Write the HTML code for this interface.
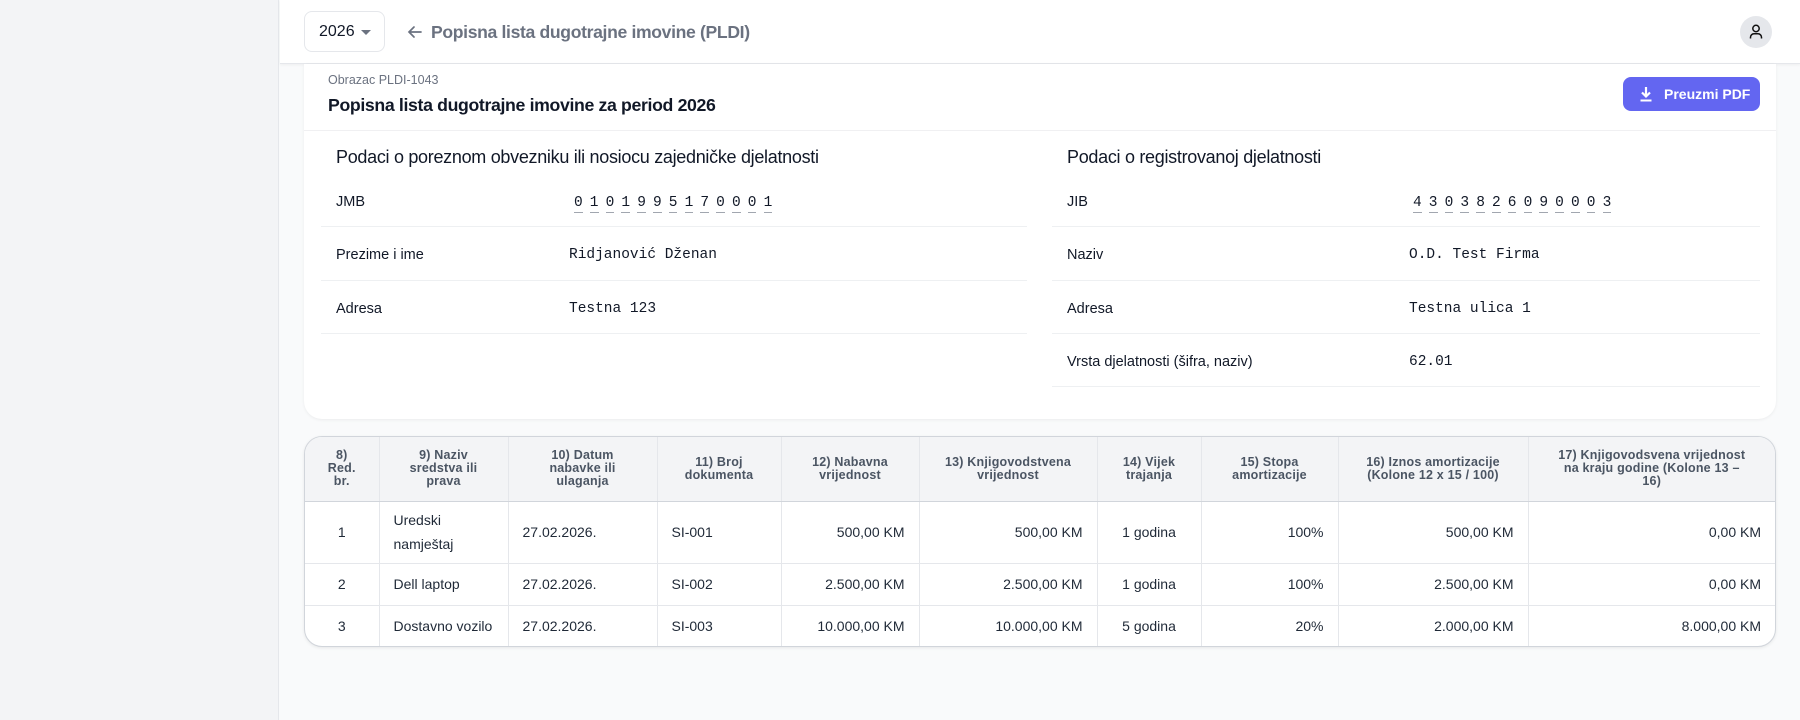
<!DOCTYPE html>
<html><head><meta charset="utf-8"><style>
*{box-sizing:border-box;margin:0;padding:0}
body{width:1800px;height:720px;overflow:hidden;background:#f9fafb;font-family:"Liberation Sans",sans-serif;color:#111827;position:relative}
.side{position:absolute;left:0;top:0;width:279px;height:720px;background:#f3f4f6;border-right:1px solid #e5e7eb}
.hdr{position:absolute;left:280px;top:0;right:0;height:64px;background:#fff;border-bottom:1px solid #e5e7eb;box-shadow:0 1px 3px rgba(0,0,0,.05)}
.sel{position:absolute;left:24px;top:11px;width:81px;height:41px;border:1px solid #e5e7eb;border-radius:8px;font-size:16px;padding:11px 0 0 14px;color:#111827}
.sel:after{content:"";position:absolute;right:13px;top:18px;border-left:5px solid transparent;border-right:5px solid transparent;border-top:5px solid #6b7280}
.title{position:absolute;left:151px;top:22px;font-size:17.6px;font-weight:bold;color:#6b7280;letter-spacing:-.35px}
.arrow{position:absolute;left:126px;top:23px}
.av{position:absolute;left:1460px;top:16px;width:32px;height:32px;border-radius:50%;background:#e5e7eb}
.card{position:absolute;left:304px;top:64px;width:1472px;height:355px;background:#fff;border-radius:0 0 18px 18px;box-shadow:0 1px 3px rgba(0,0,0,.06)}
.obr{position:absolute;left:24px;top:9px;font-size:12.5px;color:#6b7280}
.h1{position:absolute;left:24px;top:31px;font-size:17.7px;font-weight:bold;letter-spacing:-.35px}
.btn{position:absolute;left:1319px;top:13px;width:137px;height:34px;background:#6366f1;border-radius:8px;color:#fff;font-size:14px;font-weight:bold;padding:9px 0 0 41px}
.btn svg{position:absolute;left:16px;top:9px}
.div{position:absolute;left:0;right:0;top:66px;border-top:1px solid #f0f0f2}
.grid{position:absolute;top:66px;width:706px}
.grid h3{font-size:18px;font-weight:normal;height:44px;padding:17px 0 0 15px;letter-spacing:-.3px}
.row{height:53.3px;border-bottom:1px solid #eef0f2;position:relative;font-size:14.5px}
.row .l{position:absolute;left:15px;top:20px}
.row .v{position:absolute;top:20px;font-family:"Liberation Mono",monospace;font-size:14.5px}
.d{display:inline-block;border-bottom:1px solid #a1a6af;margin-right:7.1px;line-height:18px}
.tbl{position:absolute;left:304px;top:436px;width:1472px;height:211px;background:#fff;border:1px solid #d1d5db;border-radius:18px;overflow:hidden;box-shadow:0 1px 3px rgba(0,0,0,.08)}
table{border-collapse:collapse;width:100%}
th{background:#f3f4f6;font-size:12.5px;font-weight:bold;letter-spacing:.2px;color:#4b5563;line-height:13px;height:64px;border-right:1px solid #e5e7eb;border-bottom:1px solid #d1d5db;vertical-align:middle;padding:0 6px}
td{font-size:14px;color:#1f2937;border-right:1px solid #e5e7eb;border-bottom:1px solid #e5e7eb;padding:0 14px}
th:last-child,td:last-child{border-right:none}
tr:last-child td{border-bottom:none}
.r{text-align:right}.c{text-align:center}
</style></head><body>
<div class="side"></div>
<div class="hdr">
<div class="sel">2026</div>
<svg class="arrow" width="18" height="18" viewBox="0 0 18 18"><path d="M15 9H3M8 4L3 9l5 5" stroke="#6b7280" stroke-width="1.7" fill="none" stroke-linecap="round"/></svg>
<div class="title">Popisna lista dugotrajne imovine (PLDI)</div>
<div class="av"><svg width="32" height="32" viewBox="0 0 32 32"><circle cx="16" cy="12.5" r="3.2" stroke="#111" stroke-width="1.5" fill="none"/><path d="M10.5 22.5v-1.2a3.5 3.5 0 0 1 3.5-3.5h4a3.5 3.5 0 0 1 3.5 3.5v1.2" stroke="#111" stroke-width="1.5" fill="none"/></svg></div>
</div>
<div class="card">
<div class="obr">Obrazac PLDI-1043</div>
<div class="h1">Popisna lista dugotrajne imovine za period 2026</div>
<div class="btn"><svg width="14" height="16" viewBox="0 0 14 16"><path d="M7 1v9M3 6.5L7 10.5 11 6.5" stroke="#fff" stroke-width="2.2" fill="none"/><path d="M1.5 14.5h11" stroke="#fff" stroke-width="2"/></svg>Preuzmi PDF</div>
<div class="div"></div>
<div class="grid" style="left:17px">
<h3>Podaci o poreznom obvezniku ili nosiocu zajedničke djelatnosti</h3>
<div class="row"><span class="l">JMB</span><span class="v" style="left:253px"><span class="d">0</span><span class="d">1</span><span class="d">0</span><span class="d">1</span><span class="d">9</span><span class="d">9</span><span class="d">5</span><span class="d">1</span><span class="d">7</span><span class="d">0</span><span class="d">0</span><span class="d">0</span><span class="d">1</span></span></div>
<div class="row"><span class="l">Prezime i ime</span><span class="v" style="left:248px">Ridjanović Dženan</span></div>
<div class="row"><span class="l">Adresa</span><span class="v" style="left:248px">Testna 123</span></div>
</div>
<div class="grid" style="left:748px;width:708px">
<h3>Podaci o registrovanoj djelatnosti</h3>
<div class="row"><span class="l">JIB</span><span class="v" style="left:361px"><span class="d">4</span><span class="d">3</span><span class="d">0</span><span class="d">3</span><span class="d">8</span><span class="d">2</span><span class="d">6</span><span class="d">0</span><span class="d">9</span><span class="d">0</span><span class="d">0</span><span class="d">0</span><span class="d">3</span></span></div>
<div class="row"><span class="l">Naziv</span><span class="v" style="left:357px">O.D. Test Firma</span></div>
<div class="row"><span class="l">Adresa</span><span class="v" style="left:357px">Testna ulica 1</span></div>
<div class="row"><span class="l">Vrsta djelatnosti (šifra, naziv)</span><span class="v" style="left:357px">62.01</span></div>
</div>
</div>
<div class="tbl"><table>
<colgroup><col style="width:74px"><col style="width:129px"><col style="width:149px"><col style="width:124px"><col style="width:138px"><col style="width:178px"><col style="width:104px"><col style="width:137px"><col style="width:190px"><col></colgroup>
<tr><th>8)<br>Red.<br>br.</th><th>9) Naziv<br>sredstva ili<br>prava</th><th>10) Datum<br>nabavke ili<br>ulaganja</th><th>11) Broj<br>dokumenta</th><th>12) Nabavna<br>vrijednost</th><th>13) Knjigovodstvena<br>vrijednost</th><th>14) Vijek<br>trajanja</th><th>15) Stopa<br>amortizacije</th><th>16) Iznos amortizacije<br>(Kolone 12 x 15 / 100)</th><th>17) Knjigovodsvena vrijednost<br>na kraju godine (Kolone 13 –<br>16)</th></tr>
<tr style="height:62px"><td class="c">1</td><td style="line-height:24px">Uredski<br>namještaj</td><td>27.02.2026.</td><td>SI-001</td><td class="r">500,00 KM</td><td class="r">500,00 KM</td><td class="c">1 godina</td><td class="r">100%</td><td class="r">500,00 KM</td><td class="r">0,00 KM</td></tr>
<tr style="height:42px"><td class="c">2</td><td>Dell laptop</td><td>27.02.2026.</td><td>SI-002</td><td class="r">2.500,00 KM</td><td class="r">2.500,00 KM</td><td class="c">1 godina</td><td class="r">100%</td><td class="r">2.500,00 KM</td><td class="r">0,00 KM</td></tr>
<tr style="height:42px"><td class="c">3</td><td>Dostavno vozilo</td><td>27.02.2026.</td><td>SI-003</td><td class="r">10.000,00 KM</td><td class="r">10.000,00 KM</td><td class="c">5 godina</td><td class="r">20%</td><td class="r">2.000,00 KM</td><td class="r">8.000,00 KM</td></tr>
</table></div>
</body></html>
